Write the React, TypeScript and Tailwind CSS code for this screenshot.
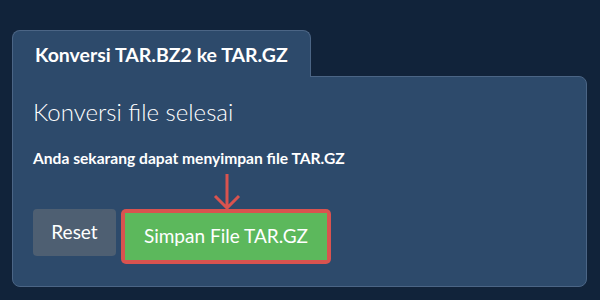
export default function App() {
  return (
    <div
      className="w-[600px] h-[300px] bg-[#11233a] pt-[30px] pl-[12px] pr-[13px]"
      style={{ fontFamily: 'Lato, "Open Sans", sans-serif' }}
    >
      <div className="flex">
        <div className="relative z-10 -mb-px h-[47px] w-[299px] rounded-t-lg border border-b-0 border-[#4b6585] bg-[#2d4a6b] pl-[22px] pt-[12px]">
          <h1 className="text-[19.5px] font-bold leading-6 text-white">Konversi TAR.BZ2 ke TAR.GZ</h1>
        </div>
      </div>
      <div className="h-[211px] rounded-b-lg rounded-tr-lg border border-[#4b6585] bg-[#2d4a6b] px-5 pt-[19px]">
        <h2 className="text-[24px] font-light leading-8 text-white">Konversi file selesai</h2>
        <p className="mt-[20px] text-[15.6px] font-bold leading-5 text-white">
          Anda sekarang dapat menyimpan file TAR.GZ
        </p>
        <div className="flex justify-start pl-[180px] pt-[6px]">
          <svg width="28" height="36" viewBox="0 0 28 36" fill="none">
            <path d="M14 0 V34 M2 22 L14 34 L26 22" stroke="#d9534f" strokeWidth="3" />
          </svg>
        </div>
        <div className="-mt-[1px] flex items-start gap-[5px]">
          <button className="h-[47px] w-[83px] rounded bg-[#4e5f72] text-[19px] text-white">Reset</button>
          <div className="rounded-[5px] bg-[#d9534f] p-[4px]">
            <button className="h-[47px] w-[202px] bg-[#5cb85c] text-[19px] text-white">Simpan File TAR.GZ</button>
          </div>
        </div>
      </div>
    </div>
  );
}
